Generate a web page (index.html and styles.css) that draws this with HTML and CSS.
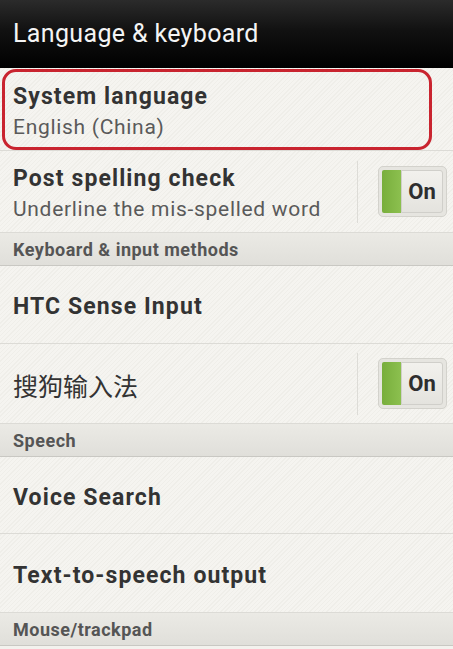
FILE: index.html
```html
<!DOCTYPE html>
<html lang="en">
<head>
  <meta charset="UTF-8" />
  <meta name="viewport" content="width=device-width, initial-scale=1.0"/>
  <title>Language &amp; keyboard</title>
  <link rel="stylesheet" href="styles.css">
</head>
<body>

  <div class="topo">Language &amp; keyboard</div>

  <div class="lista">
    <div class="item marcado" style="height: 83px">
      <div class="textos">
        <div class="titulo">System language</div>
        <div class="sub">English (China)</div>
      </div>
    </div>

    <div class="item" style="height: 82px">
      <div class="textos">
        <div class="titulo">Post spelling check</div>
        <div class="sub">Underline the mis-spelled word</div>
      </div>
      <div class="divisor"></div>
      <div class="chave"><span class="verde"></span><span class="on">On</span></div>
    </div>

    <div class="secao">Keyboard &amp; input methods</div>

    <div class="item" style="height: 78px">
      <div class="textos"><div class="titulo">HTC Sense Input</div></div>
    </div>

    <div class="item" style="height: 80px">
      <div class="textos"><div class="titulo cjk">搜狗输入法</div></div>
      <div class="divisor"></div>
      <div class="chave"><span class="verde"></span><span class="on">On</span></div>
    </div>

    <div class="secao">Speech</div>

    <div class="item" style="height: 77px">
      <div class="textos"><div class="titulo">Voice Search</div></div>
    </div>

    <div class="item" style="height: 79px">
      <div class="textos"><div class="titulo">Text-to-speech output</div></div>
    </div>

    <div class="secao">Mouse/trackpad</div>
  </div>

</body>
</html>
```

FILE: styles.css
```css
body {
  margin: 0;
  font-family: Roboto, "Noto Sans CJK SC", sans-serif;
  background: #f3f2ee;
  width: 453px;
  height: 649px;
  overflow: hidden;
}
.topo {
  height: 68px;
  box-sizing: border-box;
  padding: 0 13px 2px;
  display: flex;
  align-items: center;
  color: #f4f4f4;
  font-size: 25px;
  letter-spacing: 0.35px;
  background: linear-gradient(#2b2b2b, #111 45%, #000);
}
.lista {
  background: repeating-linear-gradient(-45deg, #f5f4f0 0 2px, #efeee9 2px 3px);
}
.item {
  position: relative;
  display: flex;
  align-items: center;
  box-sizing: border-box;
  border-bottom: 1px solid #dcdbd6;
  padding-left: 13px;
}
.textos {
  flex: 1;
  padding-top: 4px;
}
.titulo {
  font-size: 23px;
  font-weight: bold;
  letter-spacing: 1.1px;
  color: #333;
  line-height: 31px;
}
.titulo.cjk {
  font-family: "Noto Sans CJK SC", sans-serif;
  font-weight: normal;
  font-size: 25px;
  letter-spacing: 0;
}
.sub {
  font-size: 21px;
  letter-spacing: 0.7px;
  color: #5a5a5a;
  line-height: 30px;
}
.marcado::after {
  content: "";
  position: absolute;
  left: 2px;
  top: 1px;
  width: 430px;
  height: 81px;
  box-sizing: border-box;
  border: 3px solid #c9242f;
  border-radius: 14px;
}
.divisor {
  width: 1px;
  height: 62px;
  background: #dddcd7;
  margin-right: 20px;
}
.chave {
  display: flex;
  width: 69px;
  height: 51px;
  box-sizing: border-box;
  border: 1px solid #d3d2cc;
  border-radius: 5px;
  padding: 3px;
  margin-right: 6px;
  background: #e6e5e0;
}
.verde {
  width: 19px;
  background: linear-gradient(90deg, #78ae3c, #8cc04f);
  border-radius: 2px 0 0 2px;
}
.on {
  flex: 1;
  display: flex;
  align-items: center;
  justify-content: center;
  background: linear-gradient(#f2f1ed, #e4e3de);
  border: 1px solid #d0cfca;
  border-radius: 0 3px 3px 0;
  font-size: 22px;
  font-weight: bold;
  color: #2e2e2e;
}
.secao {
  height: 33px;
  box-sizing: border-box;
  padding-left: 13px;
  display: flex;
  align-items: center;
  font-size: 18px;
  font-weight: bold;
  letter-spacing: 0.5px;
  color: #555;
  background: linear-gradient(#ebeae5, #e0dfda);
  border-bottom: 1px solid #c9c8c3;
}
```
